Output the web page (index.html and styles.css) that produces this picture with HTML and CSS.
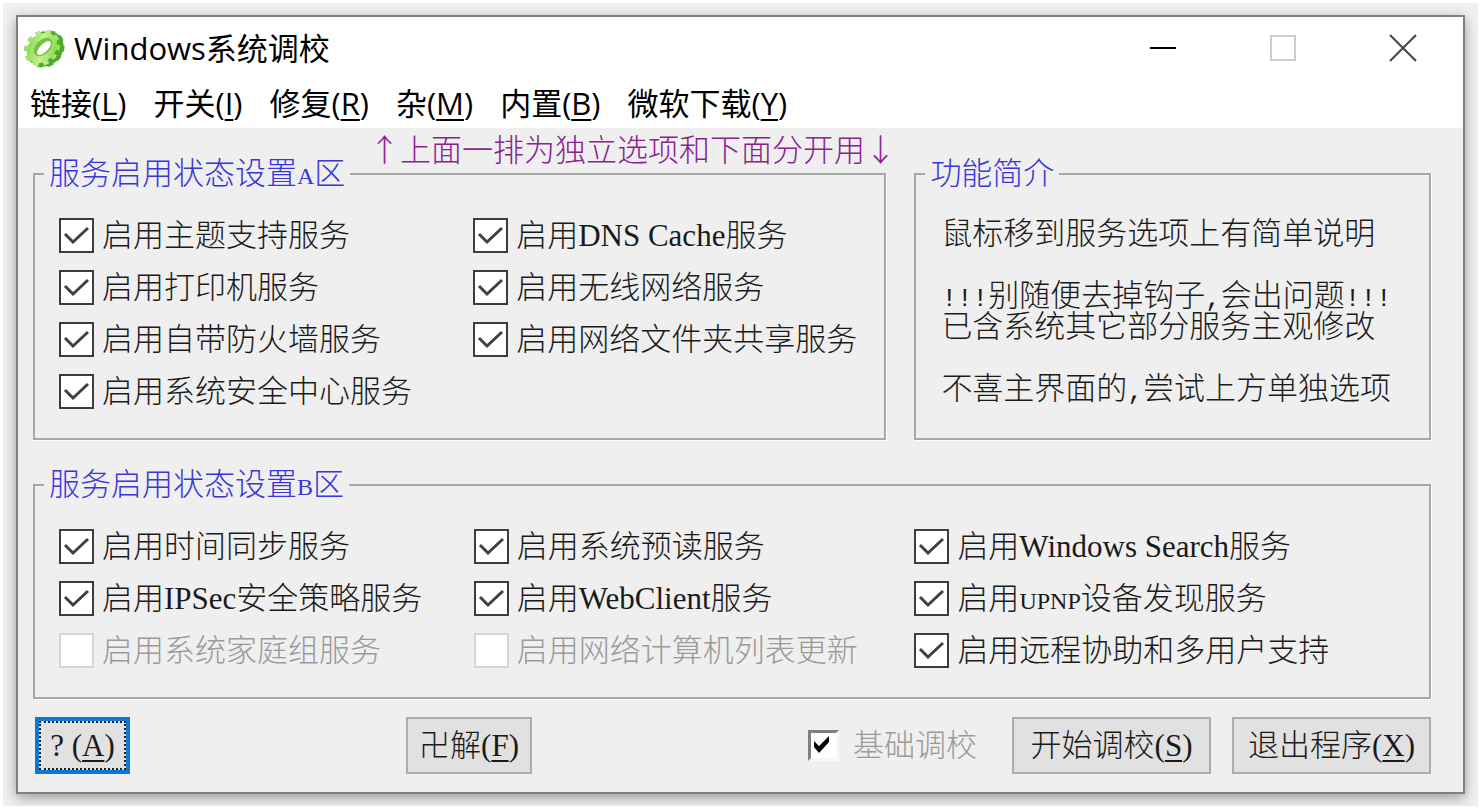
FILE: index.html
```html
<!DOCTYPE html>
<html lang="zh-CN">
<head>
    <meta charset="UTF-8">
    <title>Windows系统调校</title>
    <link rel="stylesheet" href="styles.css">
</head>
<body>
<div class="desktop">
    <div class="window">
        <header class="titlebar">
            <svg class="gear" viewBox="0 0 42 42" aria-hidden="true">
                <defs>
                    <linearGradient id="face" x1="0" y1="0" x2="1" y2="1">
                        <stop offset="0" stop-color="#8ed65c"/>
                        <stop offset="0.5" stop-color="#c4f28c"/>
                        <stop offset="1" stop-color="#8bdb4e"/>
                    </linearGradient>
                </defs>
                <g fill="none" stroke="#4cab2a">
                    <ellipse cx="23" cy="22" rx="15" ry="12" transform="rotate(-45 23 22)" stroke-width="8"/>
                    <ellipse cx="23" cy="22" rx="18" ry="15" transform="rotate(-45 23 22)" stroke-width="4" pathLength="110" stroke-dasharray="6 5"/>
                </g>
                <g fill="none" stroke="url(#face)">
                    <ellipse cx="19" cy="21" rx="17" ry="14" transform="rotate(-45 19 21)" stroke-width="5" pathLength="110" stroke-dasharray="6 5"/>
                    <ellipse cx="19" cy="21" rx="13" ry="9" transform="rotate(-45 19 21)" stroke-width="8"/>
                </g>
                <ellipse cx="20" cy="20" rx="11" ry="7" transform="rotate(-45 20 20)" fill="#6fc242"/>
                <ellipse cx="21" cy="21" rx="9" ry="4" transform="rotate(-45 21 21)" fill="#fff"/>
            </svg>
            <h1 class="title">Windows系统调校</h1>
            <button class="caption-button" aria-label="最小化">
                <svg viewBox="0 0 28 28"><path d="M1 14H27" stroke="#000" stroke-width="2"/></svg>
            </button>
            <button class="caption-button" aria-label="最大化" disabled>
                <svg viewBox="0 0 28 28"><path d="M2 2H26V26H2Z" fill="none" stroke="#ccc" stroke-width="2"/></svg>
            </button>
            <button class="caption-button" aria-label="关闭">
                <svg viewBox="0 0 28 28"><path d="M1 1L27 27M27 1L1 27" stroke="#444" stroke-width="2"/></svg>
            </button>
        </header>
        <nav class="menu">
            <a href="#">链接(<u>L</u>)</a>
            <a href="#">开关(<u>I</u>)</a>
            <a href="#">修复(<u>R</u>)</a>
            <a href="#">杂(<u>M</u>)</a>
            <a href="#">内置(<u>B</u>)</a>
            <a href="#">微软下载(<u>Y</u>)</a>
        </nav>
        <main class="content">
            <p class="hint">↑上面一排为独立选项和下面分开用↓</p>
            <div class="top-row">
                <fieldset class="group">
                    <legend>服务启用状态设置<span class="caps">A</span>区</legend>
                    <div class="options options-a">
                        <label><input type="checkbox" checked>启用主题支持服务</label>
                        <label><input type="checkbox" checked>启用DNS Cache服务</label>
                        <label><input type="checkbox" checked>启用打印机服务</label>
                        <label><input type="checkbox" checked>启用无线网络服务</label>
                        <label><input type="checkbox" checked>启用自带防火墙服务</label>
                        <label><input type="checkbox" checked>启用网络文件夹共享服务</label>
                        <label><input type="checkbox" checked>启用系统安全中心服务</label>
                    </div>
                </fieldset>
                <fieldset class="group">
                    <legend>功能简介</legend>
                    <div class="intro">
                        <p>鼠标移到服务选项上有简单说明</p>
                        <p><span class="half">!!!</span>别随便去掉钩子<span class="half">,</span>会出问题<span class="half">!!!</span><br>已含系统其它部分服务主观修改</p>
                        <p>不喜主界面的<span class="half">,</span>尝试上方单独选项</p>
                    </div>
                </fieldset>
            </div>
            <fieldset class="group">
                <legend>服务启用状态设置<span class="caps">B</span>区</legend>
                <div class="options options-b">
                    <label><input type="checkbox" checked>启用时间同步服务</label>
                    <label><input type="checkbox" checked>启用系统预读服务</label>
                    <label><input type="checkbox" checked>启用Windows Search服务</label>
                    <label><input type="checkbox" checked>启用IPSec安全策略服务</label>
                    <label><input type="checkbox" checked>启用WebClient服务</label>
                    <label><input type="checkbox" checked><span>启用<span class="caps">UPNP</span>设备发现服务</span></label>
                    <label class="disabled"><input type="checkbox" disabled>启用系统家庭组服务</label>
                    <label class="disabled"><input type="checkbox" disabled>启用网络计算机列表更新</label>
                    <label><input type="checkbox" checked>启用远程协助和多用户支持</label>
                </div>
            </fieldset>
            <footer class="actions">
                <button class="button button-default">? (<u>A</u>)</button>
                <button class="button button-small">卍解(<u>F</u>)</button>
                <div class="actions-right">
                    <label class="basic disabled"><input type="checkbox" checked>基础调校</label>
                    <button class="button button-wide">开始调校(<u>S</u>)</button>
                    <button class="button button-wide">退出程序(<u>X</u>)</button>
                </div>
            </footer>
        </main>
    </div>
</div>
</body>
</html>
```
FILE: styles.css
```css
* {
    box-sizing: border-box;
}
body {
    margin: 0;
    background-color: #ffffff;
    color: #1a1a1a;
    font-family: "Liberation Serif", "Noto Sans CJK SC", serif;
    font-size: 31px;
    font-weight: 300;
    line-height: 31px;
}
button, input {
    font: inherit;
    color: inherit;
}
p, h1 {
    margin: 0;
}
u {
    text-underline-offset: 4px;
    text-decoration-thickness: 2px;
}
.desktop {
    margin: 3px;
    padding: 12px 13px;
    background-color: #f0f0f0;
    overflow: hidden;
}
.window {
    border: 2px solid #808080;
    background-color: #efefef;
    box-shadow: 0 4px 12px rgba(0, 0, 0, 0.35);
}

/* title bar and menu */
.titlebar {
    display: flex;
    align-items: center;
    height: 61px;
    padding-left: 5px;
    background-color: #ffffff;
}
.gear {
    width: 42px;
    height: 42px;
}
.title {
    flex: 1;
    margin-left: 9px;
    color: #000000;
    font-family: "Open Sans", "Noto Sans CJK SC", sans-serif;
    font-size: 31px;
    font-weight: 400;
    line-height: 40px;
}
.caption-button {
    display: flex;
    align-items: center;
    justify-content: center;
    width: 120px;
    height: 61px;
    padding: 0;
    border: none;
    background: none;
}
.caption-button svg {
    width: 28px;
    height: 28px;
}
.menu {
    display: flex;
    gap: 27px;
    height: 50px;
    padding: 5px 12px;
    background-color: #ffffff;
    font-family: "Open Sans", "Noto Sans CJK SC", sans-serif;
    font-weight: 400;
    line-height: 40px;
}
.menu a {
    color: #000000;
    text-decoration: none;
}

/* client area */
.content {
    padding: 6px 32px 18px 15px;
}
.hint {
    margin: 0 0 2px 336px;
    color: #8b2292;
    font-family: "Noto Sans CJK SC", sans-serif;
    line-height: 28px;
}
.top-row {
    display: grid;
    grid-template-columns: 854fr 517fr;
    gap: 28px;
    margin-bottom: 35px;
}
.group {
    min-width: 0;
    margin: 0;
    padding: 25px 0 21px 24px;
    border: 2px solid #a8a8a8;
    box-shadow: 1px 1px #ffffff;
}
.group legend {
    margin-left: -15px;
    padding: 0 5px;
    color: #3a35dc;
    line-height: 20px;
}
.options {
    display: grid;
    grid-auto-rows: 52px;
    align-items: center;
}
.options-a {
    grid-template-columns: 415fr 412fr;
}
.options-b {
    grid-template-columns: 415fr 441fr 515fr;
}
.options label {
    display: flex;
    align-items: center;
    gap: 8px;
    white-space: nowrap;
}
.options input {
    appearance: none;
    width: 35px;
    height: 35px;
    margin: 0;
    border: 2px solid #3c3c3c;
    background-color: #ffffff;
}
.options input:checked {
    background-image: url("data:image/svg+xml,%3Csvg xmlns='http://www.w3.org/2000/svg' viewBox='0 0 31 31'%3E%3Cpath d='M4 14L12 22L27 8' fill='none' stroke='%23404040' stroke-width='3'/%3E%3C/svg%3E");
}
.options input:disabled {
    border-color: #d4d4d4;
}
.disabled {
    color: #9a9a9a;
}
.intro {
    display: flex;
    flex-direction: column;
    gap: 31px;
    padding: 9px 0 0 1px;
    white-space: nowrap;
}
.half {
    font-family: "Liberation Mono", monospace;
    font-size: 26px;
    line-height: 10px;
}
.caps {
    font-size: 24px;
    line-height: 10px;
}

/* bottom buttons */
.actions {
    display: flex;
    align-items: center;
    justify-content: space-between;
    margin-top: 18px;
    padding-left: 2px;
}
.actions-right {
    display: flex;
    align-items: center;
    gap: 21px;
}
.basic {
    display: flex;
    align-items: center;
    gap: 14px;
    margin-right: 14px;
}
.basic input {
    appearance: none;
    width: 31px;
    height: 31px;
    margin: 0;
    border: 3px solid #808080;
    border-right-color: #f8f8f8;
    border-bottom-color: #f8f8f8;
    background-color: #ffffff;
}
.basic input:checked {
    background-image: url("data:image/svg+xml,%3Csvg xmlns='http://www.w3.org/2000/svg' viewBox='0 0 25 25'%3E%3Cpath d='M3 8V14L8 20L18 9V3L8 13Z'/%3E%3C/svg%3E");
}
.button {
    height: 57px;
    padding: 0;
    border: 2px solid #adadad;
    background-color: #e1e1e1;
    white-space: nowrap;
}
.button-default {
    width: 95px;
    border: 4px solid #0f78d0;
    outline: 2px dotted #222222;
    outline-offset: -6px;
}
.button-small {
    width: 126px;
}
.button-wide {
    width: 199px;
}
```
